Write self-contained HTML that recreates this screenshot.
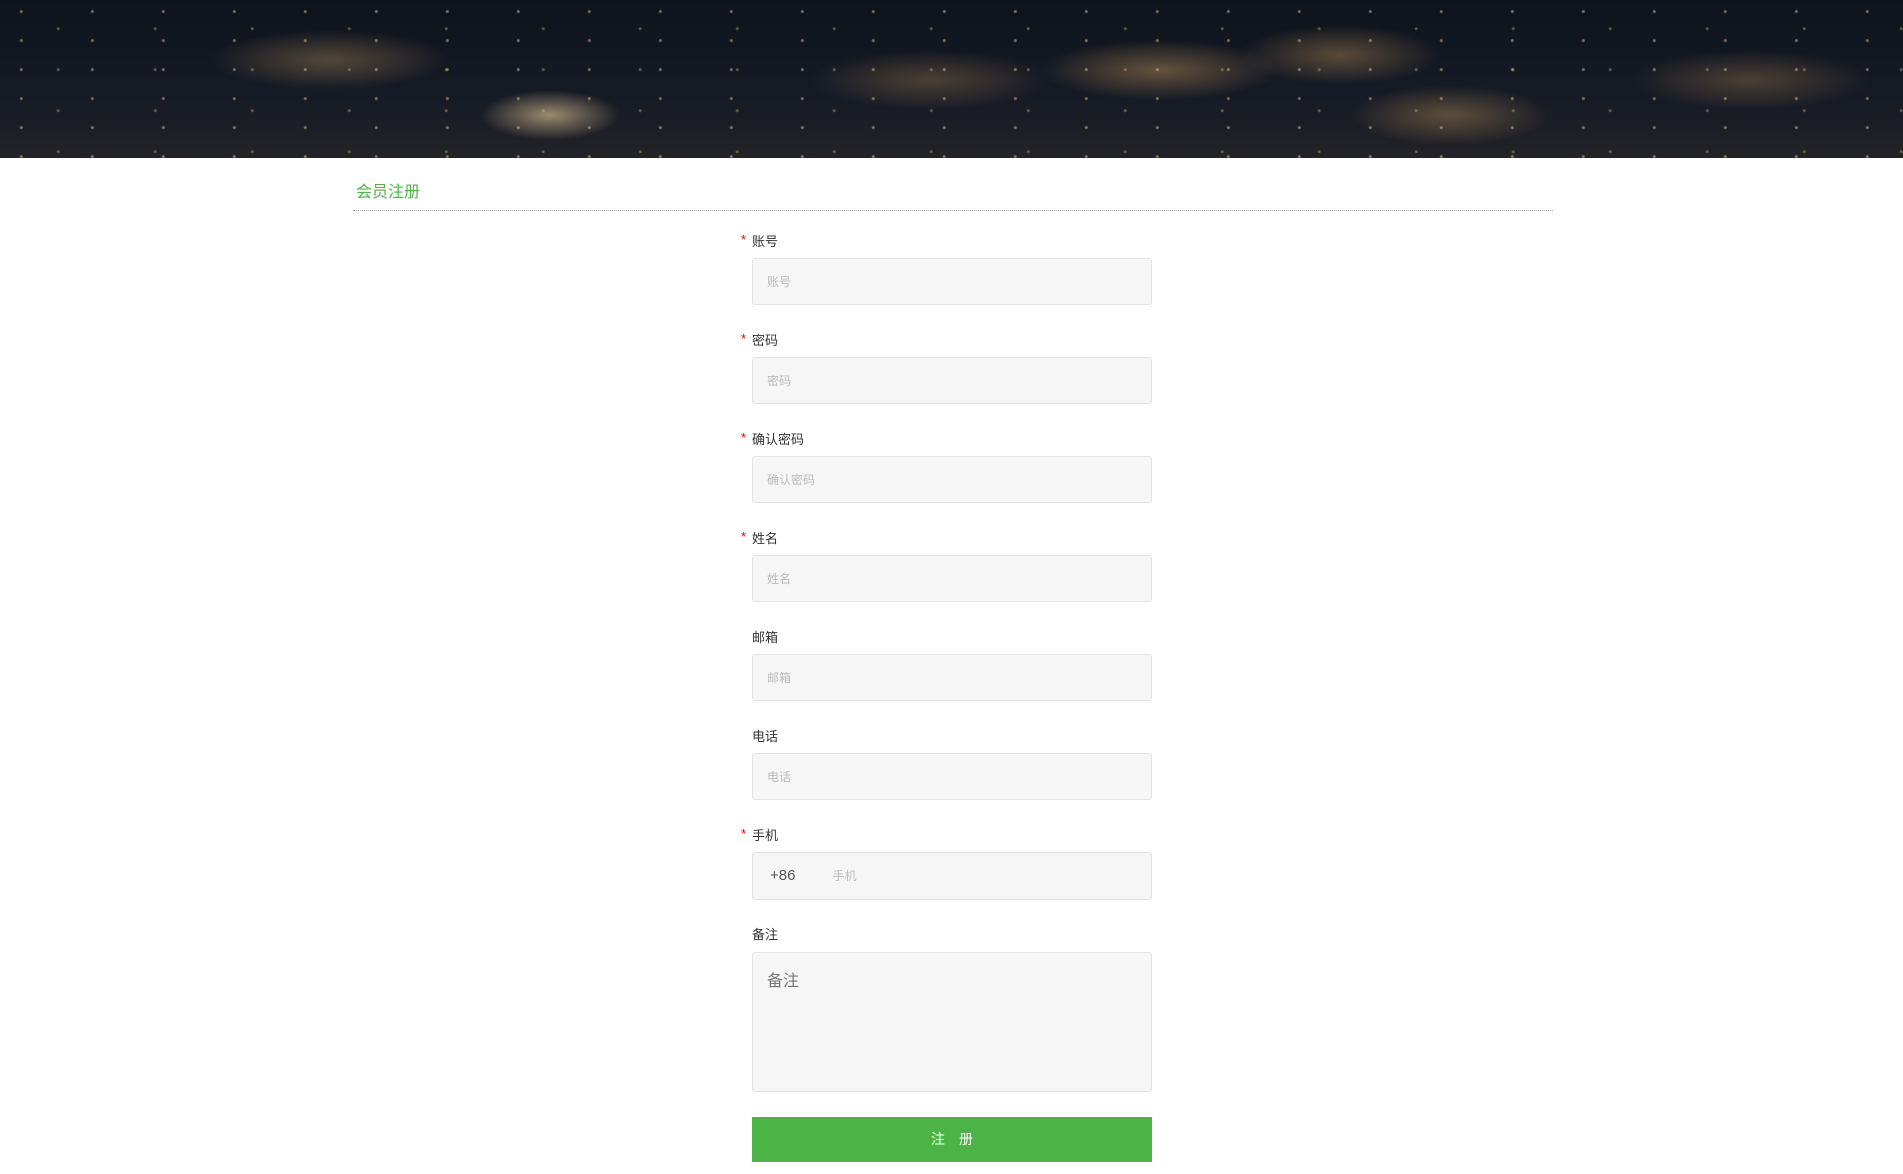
<!DOCTYPE html>
<html><head><meta charset="utf-8"><style>
*{margin:0;padding:0;box-sizing:border-box}
body{width:1903px;height:1174px;background:#fff;font-family:"Liberation Sans","Noto Sans CJK SC",sans-serif;position:relative;overflow:hidden}
.banner{position:absolute;left:0;top:0;width:1903px;height:158px;background:
radial-gradient(circle at 30% 40%,rgba(255,210,140,.45) 0 1px,transparent 2px) 0 0/71px 29px,
radial-gradient(circle at 60% 70%,rgba(255,200,120,.35) 0 1px,transparent 2px) 0 0/97px 41px,
radial-gradient(ellipse 70px 25px at 550px 115px,rgba(240,210,160,.6),transparent),
radial-gradient(ellipse 120px 30px at 330px 60px,rgba(200,160,100,.35),transparent),
radial-gradient(ellipse 120px 30px at 1160px 70px,rgba(220,170,100,.4),transparent),
radial-gradient(ellipse 100px 30px at 1340px 55px,rgba(220,170,100,.35),transparent),
radial-gradient(ellipse 100px 30px at 1450px 115px,rgba(220,170,100,.35),transparent),
radial-gradient(ellipse 120px 30px at 930px 80px,rgba(200,150,90,.3),transparent),
radial-gradient(ellipse 120px 30px at 1750px 80px,rgba(200,150,90,.3),transparent),
linear-gradient(#0f131c,#161a25 60%,#232327)}
.title{position:absolute;left:356px;top:178px;font-size:16px;color:#4cb347}
.hr{position:absolute;left:353px;top:210px;width:1200px;border-top:1px dotted #aaa}
.lbl{position:absolute;left:752px;font-size:13px;color:#333}
.lbl i{position:absolute;left:-11px;top:1px;color:#e00;font-style:normal}
.inp{position:absolute;left:752px;width:400px;height:47px;background:#f6f6f6;border:1px solid #e3e3e3;border-radius:3px;font-size:12px;color:#bbb;padding:0 14px;line-height:46px}
.btn{position:absolute;left:752px;top:1117px;width:400px;height:45px;background:#4cb347;color:#fff;font-size:14px;text-align:center;line-height:45px;letter-spacing:14px;text-indent:14px}
</style></head><body>
<div class="banner"></div>
<div class="title">会员注册</div>
<div class="hr"></div>

<div class="lbl" style="top:231px"><i>*</i>账号</div>
<div class="inp" style="top:258px">账号</div>
<div class="lbl" style="top:330px"><i>*</i>密码</div>
<div class="inp" style="top:357px">密码</div>
<div class="lbl" style="top:429px"><i>*</i>确认密码</div>
<div class="inp" style="top:456px">确认密码</div>
<div class="lbl" style="top:528px"><i>*</i>姓名</div>
<div class="inp" style="top:555px">姓名</div>
<div class="lbl" style="top:627px">邮箱</div>
<div class="inp" style="top:654px">邮箱</div>
<div class="lbl" style="top:726px">电话</div>
<div class="inp" style="top:753px">电话</div>
<div class="lbl" style="top:825px"><i>*</i>手机</div>
<div class="inp" style="top:852px;height:48px;padding-left:17px"><span style="color:#555;font-size:15px">+86</span><span style="margin-left:37px">手机</span></div>
<div class="lbl" style="top:924px">备注</div>
<div class="inp" style="top:952px;height:140px;font-size:16px;color:#777;line-height:20px;padding-top:19px">备注</div>
<div class="btn">注册</div>
</body></html>
